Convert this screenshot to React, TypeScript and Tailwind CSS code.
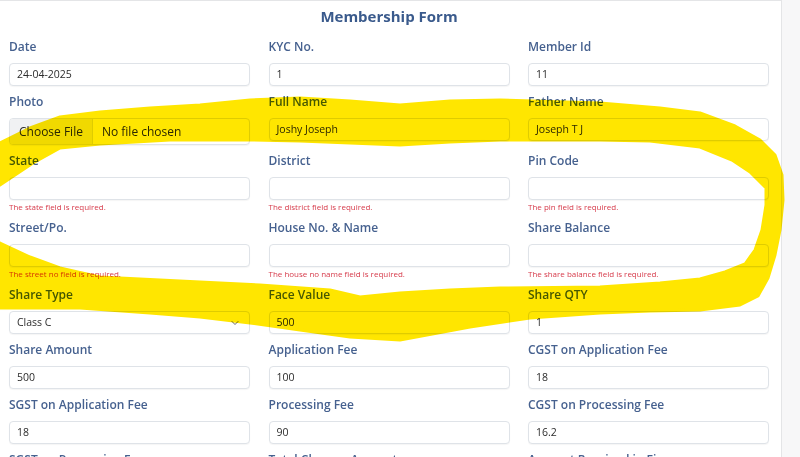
import React from 'react';
import { ChevronDown } from 'lucide-react';

type Field = {
  label: string;
  value?: string;
  kind?: 'text' | 'file' | 'select';
  error?: string;
};

const ROWS: Field[][] = [
  [
    { label: 'Date', value: '24-04-2025' },
    { label: 'KYC No.', value: '1' },
    { label: 'Member Id', value: '11' },
  ],
  [
    { label: 'Photo', kind: 'file' },
    { label: 'Full Name', value: 'Joshy Joseph' },
    { label: 'Father Name', value: 'Joseph T J' },
  ],
  [
    { label: 'State', error: 'The state field is required.' },
    { label: 'District', error: 'The district field is required.' },
    { label: 'Pin Code', error: 'The pin field is required.' },
  ],
  [
    { label: 'Street/Po.', error: 'The street no field is required.' },
    { label: 'House No. & Name', error: 'The house no name field is required.' },
    { label: 'Share Balance', error: 'The share balance field is required.' },
  ],
  [
    { label: 'Share Type', value: 'Class C', kind: 'select' },
    { label: 'Face Value', value: '500' },
    { label: 'Share QTY', value: '1' },
  ],
  [
    { label: 'Share Amount', value: '500' },
    { label: 'Application Fee', value: '100' },
    { label: 'CGST on Application Fee', value: '18' },
  ],
  [
    { label: 'SGST on Application Fee', value: '18' },
    { label: 'Processing Fee', value: '90' },
    { label: 'CGST on Processing Fee', value: '16.2' },
  ],
  [
    { label: 'SGST on Processing Fee', value: '' },
    { label: 'Total Charges Amount', value: '' },
    { label: 'Amount Received in Figures', value: '' },
  ],
];

// highlighter scribble, traced as one filled outline (outer edge, then inner edge back)
const SCRIBBLE =
  'M-5 145 L0 143 L30 128 L60 117 L100 112 L150 108 L200 105 L250 100 L300 98 L350 101 L400 105 L450 101 L500 100 L600 103 L660 108 L700 113 L735 126 L760 140 L775 155 L782 175 L783 200 L780 230 L775 255 L768 278 L758 296 L740 305 L700 310 L650 311 L600 313 L530 318 L470 327 L400 340 L350 337 L300 330 L250 323 L200 317 L150 313 L80 308 L-5 308 ' +
  'L-5 240 L0 243 L30 257 L60 268 L100 277 L200 282 L260 285 L330 290 L360 297 L400 293 L450 290 L500 288 L600 287 L660 283 L700 279 L725 272 L745 264 L755 250 L762 230 L766 205 L766 188 L750 172 L732 160 L700 147 L650 141 L600 140 L500 140 L450 142 L400 145 L350 143 L300 141 L250 140 L170 140 L100 144 L60 148 L33 163 L0 185 L-5 188 Z';

function FieldBox({ field }: { field: Field }) {
  return (
    <div className="flex flex-col">
      <label className="mb-[8px] text-[12px] font-semibold leading-[16px] text-[#46618f]">{field.label}</label>
      {field.kind === 'file' ? (
        <div className="flex h-[27px] items-center overflow-hidden rounded-[4px] border border-[#dfe3e8] bg-white text-[12px] text-[#2b2b2b] shadow-[0_1px_1px_rgba(0,0,0,0.04)]">
          <span className="flex h-full items-center border-r border-[#dfe3e8] bg-[#f0f1f3] px-[9px]">Choose File</span>
          <span className="pl-[9px]">No file chosen</span>
        </div>
      ) : (
        <div className="flex h-[23px] items-center justify-between rounded-[4px] border border-[#dfe3e8] bg-white px-[7px] text-[10.5px] text-[#2b2b2b] shadow-[0_1px_1px_rgba(0,0,0,0.04)]">
          <span>{field.value}</span>
          {field.kind === 'select' && <ChevronDown size={12} strokeWidth={1.6} className="mr-[1px] text-[#444]" />}
        </div>
      )}
      {field.error && (
        <p className="pt-[1px] text-[8px] leading-[11px] text-[#d63a4a]">{field.error}</p>
      )}
    </div>
  );
}

export default function App() {
  return (
    <div className="relative h-[457px] w-[800px] overflow-hidden bg-[#f7f7f8] font-['Open_Sans','Noto_Sans',sans-serif]">
      <div className="h-full w-[782px] border-r border-t border-[#e4e5e7] bg-white pl-[9px] pt-[4px]">
        <h1 className="mb-[12px] w-[760px] text-center text-[15px] font-bold leading-[22px] text-[#3a5a8c]">Membership Form</h1>
        <div className="grid w-[760px] grid-cols-3 gap-x-[18.5px] gap-y-[8px]">
          {ROWS.flat().map((field) => (
            <FieldBox key={field.label} field={field} />
          ))}
        </div>
      </div>

      <svg
        className="pointer-events-none absolute inset-0 mix-blend-multiply"
        width="800"
        height="457"
        viewBox="0 0 800 457"
      >
        <path d={SCRIBBLE} fill="#ffe600" stroke="#ffe600" strokeWidth="3" strokeLinejoin="round" />
      </svg>
    </div>
  );
}
